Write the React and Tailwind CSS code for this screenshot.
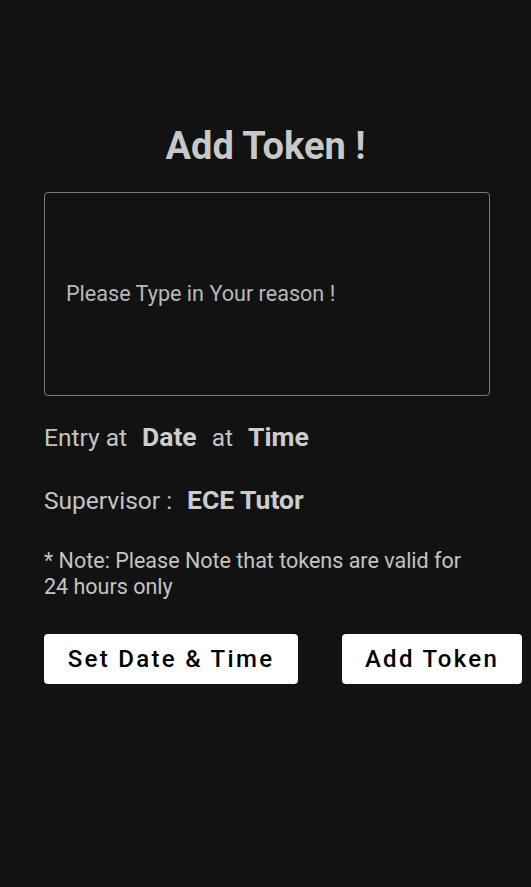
function InfoRow({ children, className = "" }) {
    return (
        <div className={`flex items-baseline gap-[15px] text-[#c4c4c4] ${className}`}>
            {children}
        </div>
    );
}

export default function App() {
    return (
        <div
            className="min-h-[887px] w-full bg-[#121212] px-[44px] pt-[124px]"
            style={{ fontFamily: "Roboto, 'Noto Sans', sans-serif" }}
        >
            <h1 className="text-center text-[38px] leading-[44px] font-bold text-[#c8c8c8] [text-shadow:0_0_1px_#000]">
                Add Token !
            </h1>

            <div className="mt-[24px] mr-[-3px] h-[204px] rounded-[4px] border border-[#7a7a7a] flex items-center px-[21px]">
                <span className="text-[21.6px] text-[#b8b8b8]">Please Type in Your reason !</span>
            </div>

            <InfoRow className="mt-[21px] h-[32px]">
                <span className="text-[24.5px]">Entry at</span>
                <span className="text-[26.5px] font-bold text-[#cdcdcd]">Date</span>
                <span className="text-[24.5px]">at</span>
                <span className="text-[26.5px] font-bold text-[#cdcdcd]">Time</span>
            </InfoRow>

            <InfoRow className="mt-[31px] h-[32px]">
                <span className="text-[24.5px]">Supervisor :</span>
                <span className="text-[26.5px] font-bold text-[#cdcdcd]">ECE Tutor</span>
            </InfoRow>

            <p className="mt-[36px] text-[21.5px] leading-[26px] text-[#c4c4c4] max-w-[440px]">
                * Note: Please Note that tokens are valid for 24 hours only
            </p>

            <div className="mt-[34px] flex gap-[44px] mr-[-40px]">
                <button className="w-[254px] h-[50px] rounded-[4px] bg-white text-black text-[24px] font-medium tracking-[2.3px]">
                    Set Date &amp; Time
                </button>
                <button className="w-[180px] h-[50px] rounded-[4px] bg-white text-black text-[24px] font-medium tracking-[2.3px]">
                    Add Token
                </button>
            </div>
        </div>
    );
}
